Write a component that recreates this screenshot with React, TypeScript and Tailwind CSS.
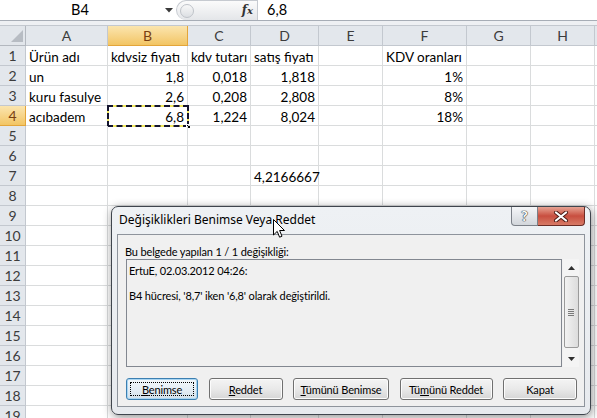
import React from "react";

type Cell = { t: string; r?: boolean };

const L = (t: string): Cell => ({ t });
const R = (t: string): Cell => ({ t, r: true });
const E: Cell = { t: "" };

const letters = ["A", "B", "C", "D", "E", "F", "G", "H", ""];

const data: Cell[][] = [
  [L("Ürün adı"), L("kdvsiz fiyatı"), L("kdv tutarı"), L("satış fiyatı"), E, L("KDV oranları"), E, E, E],
  [L("un"), R("1,8"), R("0,018"), R("1,818"), E, R("1%"), E, E, E],
  [L("kuru fasulye"), R("2,6"), R("0,208"), R("2,808"), E, R("8%"), E, E, E],
  [L("acıbadem"), R("6,8"), R("1,224"), R("8,024"), E, R("18%"), E, E, E],
  [E, E, E, E, E, E, E, E, E],
  [E, E, E, E, E, E, E, E, E],
  [E, E, E, L("4,2166667"), E, E, E, E, E],
];

function rowCells(i: number): Cell[] {
  if (i < data.length) return data[i];
  return [E, E, E, E, E, E, E, E, E];
}

function Btn({ children, w, focused }: { children: React.ReactNode; w: string; focused?: boolean }) {
  return (
    <div
      className={
        "relative flex h-[22px] items-center justify-center whitespace-nowrap rounded-[3px] border " +
        w +
        " " +
        (focused
          ? "border-[#3c7fb1] bg-gradient-to-b from-[#f4f8fb] via-[#e6eef5] to-[#d3e0ea] shadow-[inset_0_0_0_1px_#a9d6f3]"
          : "border-[#707070] bg-gradient-to-b from-[#f4f4f4] via-[#e9e9e9] to-[#d6d6d6] shadow-[inset_0_0_0_1px_#fcfcfc]")
      }
    >
      {focused && <div className="absolute inset-[3px] border border-dotted border-black" />}
      <span className="no-underline leading-[15px]">{children}</span>
    </div>
  );
}

export default function App() {
  return (
    <div className="relative h-[418px] w-[597px] overflow-hidden bg-white font-['Lato',sans-serif] text-black">
      {/* formula bar */}
      <div className="flex h-[21px] border-b border-[#a7adb6] bg-white">
        <div className="flex w-[176px] items-center">
          <span className="w-[160px] text-center text-[14.5px] leading-[20px]">B4</span>
          <svg width="8" height="5" viewBox="0 0 8 5" className="ml-[5px]">
            <path d="M0 0 L8 0 L4 4.5 Z" fill="#3a3a3a" />
          </svg>
        </div>
        <div className="flex w-[81px] items-center rounded-l-[10px] border-l border-t border-[#c6cad0] bg-gradient-to-b from-[#fbfbfb] to-[#e4e6e9]">
          <div className="ml-[3px] h-[14px] w-[14px] rounded-full border border-[#bfc3c9] bg-gradient-to-b from-[#f8f8f8] to-[#dcdfe3]" />
          <span className="ml-auto mr-[4px] font-['DejaVu_Serif',serif] text-[12px] font-bold italic leading-[20px] text-[#333]">
            f<span className="text-[10px]">x</span>
          </span>
        </div>
        <div className="w-px bg-[#c6cad0]" />
        <div className="flex-1 pl-[9px] text-[14.5px] leading-[20px]">6,8</div>
      </div>
      <div className="h-[5px] border-b border-[#c3c8cf] bg-[#eef0f3]" />

      {/* sheet */}
      <div className="grid grid-cols-[26px_82px_80px_63px_68px_64px_84px_64px_64px_64px] text-[13.5px]">
        {/* header row */}
        <div className="relative h-[20px] border-b border-r border-[#b3b8bf] bg-[#e2e6eb]">
          <svg width="12" height="12" viewBox="0 0 12 12" className="absolute bottom-[3px] right-[2px]">
            <path d="M12 0 L12 12 L0 12 Z" fill="#b7bcc3" />
          </svg>
        </div>
        {letters.map((l, i) => (
          <div
            key={"h" + i}
            className={
              "flex h-[20px] items-center justify-center border-b border-r text-[14px] leading-[18px] " +
              (l === "B"
                ? "border-[#e3a53a] bg-gradient-to-b from-[#fbe5ae] to-[#f2c563] text-[#7a3f12]"
                : "border-[#c3c8cf] bg-[#e3e7ec] text-[#3c3c3c]")
            }
          >
            {l}
          </div>
        ))}
        {Array.from({ length: 19 }).map((_, ri) => {
          const cells = rowCells(ri);
          const sel = ri === 3;
          return (
            <React.Fragment key={"r" + ri}>
              <div
                className={
                  "flex h-[20px] items-center justify-center border-b border-r text-[14px] leading-[18px] " +
                  (sel
                    ? "border-[#e3a53a] bg-gradient-to-b from-[#fbe5ae] to-[#f2c563] text-[#7a3f12]"
                    : "border-[#c3c8cf] bg-[#e3e7ec] text-[#3c3c3c]")
                }
              >
                {ri + 1}
              </div>
              {cells.map((c, ci) => (
                <div
                  key={"c" + ri + "-" + ci}
                  className={
                    "relative flex h-[20px] items-center whitespace-nowrap border-b border-r border-[#dadcdd] pt-[2px] leading-[18px] " +
                    (c.r ? "justify-end pr-[3px]" : "pl-[3px]")
                  }
                >
                  {ri === 3 && ci === 1 && (
                    <>
                      <div className="absolute -left-px -top-px bottom-[-2px] right-[-2px] border-2 border-[#f3ea5f]" />
                      <div className="absolute -left-px -top-px bottom-[-2px] right-[-2px] border-2 border-dashed border-[#14142e]" />
                      <div className="absolute bottom-[-4px] right-[-4px] h-[5px] w-[5px] border border-white bg-black" />
                    </>
                  )}
                  <span className="relative">{c.t}</span>
                </div>
              ))}
            </React.Fragment>
          );
        })}
      </div>

      {/* dialog */}
      <div className="absolute left-[111px] top-[206px] flex h-[209px] w-[480px] flex-col rounded-[7px] border border-[#3f454d] bg-gradient-to-b from-[#eef1f4] to-[#e7eaee] font-['Lato',sans-serif] text-[11px] tracking-[-0.15px] text-black shadow-[1px_2px_10px_rgba(0,0,0,0.45)]">
        <div className="flex h-[27px] shrink-0">
          <div className="flex-1 whitespace-nowrap pl-[7px] pt-[5px] font-['Noto_Sans',sans-serif] text-[12px] tracking-normal leading-[16px]">Değişiklikleri Benimse Veya Reddet</div>
          <div className="mr-[5px] flex h-[19px]">
            <div className="flex w-[27px] items-center justify-center rounded-bl-[4px] border border-t-0 border-[#7b8088] bg-gradient-to-b from-[#f5f6f8] via-[#e3e6ea] to-[#d2d6db]">
              <span className="text-[14px] font-bold leading-[16px] text-white [text-shadow:0_0_1px_#333,0_0_1px_#333,0_0_1px_#333]">?</span>
            </div>
            <div className="flex w-[47px] items-center justify-center rounded-br-[4px] border border-l-0 border-t-0 border-[#6b2c25] bg-gradient-to-b from-[#e6a394] via-[#c84e3f] to-[#d77a66]">
              <svg width="16" height="11" viewBox="0 0 16 11">
                <path d="M3 1.5 L13 9.5 M13 1.5 L3 9.5" stroke="#4a1a14" strokeWidth="4" strokeLinecap="round" />
                <path d="M3 1.5 L13 9.5 M13 1.5 L3 9.5" stroke="#ffffff" strokeWidth="2.2" strokeLinecap="round" />
              </svg>
            </div>
          </div>
        </div>
        <div className="mx-[5px] mb-[7px] flex flex-1 flex-col border border-[#8e949c] bg-[#f0f0f0] pl-[7px] pt-[9px]">
          <div className="whitespace-nowrap leading-[15px]">Bu belgede yapılan 1 / 1 değişikliği:</div>
          <div className="ml-[1px] flex">
            <div className="h-[108px] w-[436px] border border-[#828790] bg-[#f0f0f0] pl-[2px] pt-[3px]">
              <div className="leading-[15px]">ErtuE, 02.03.2012 04:26:</div>
              <div className="mt-[10px] leading-[15px]">B4 hücresi, '8,7' iken '6,8' olarak değiştirildi.</div>
            </div>
            <div className="ml-[1px] flex h-[108px] w-[16px] flex-col items-center bg-[#f4f4f4]">
              <div className="flex h-[17px] items-center justify-center">
                <svg width="7" height="4" viewBox="0 0 7 4">
                  <path d="M0 4 L3.5 0 L7 4 Z" fill="#2f2f2f" />
                </svg>
              </div>
              <div className="flex h-[72px] w-[15px] items-center justify-center rounded-[2px] border border-[#9a9a9a] bg-gradient-to-r from-[#f2f2f2] to-[#dcdcdc]">
                <div className="flex flex-col gap-[1px]">
                  <div className="h-px w-[6px] bg-[#7a7a7a]" />
                  <div className="h-px w-[6px] bg-[#7a7a7a]" />
                  <div className="h-px w-[6px] bg-[#7a7a7a]" />
                  <div className="h-px w-[6px] bg-[#7a7a7a]" />
                </div>
              </div>
              <div className="flex-1" />
              <div className="flex h-[17px] items-center justify-center">
                <svg width="7" height="4" viewBox="0 0 7 4">
                  <path d="M0 0 L3.5 4 L7 0 Z" fill="#2f2f2f" />
                </svg>
              </div>
            </div>
          </div>
          <div className="ml-[1px] mt-[11px] flex w-[451px] justify-between">
            <Btn w="w-[72px]" focused>
              <span className="underline">B</span>enimse
            </Btn>
            <Btn w="w-[74px]">
              <span className="underline">R</span>eddet
            </Btn>
            <Btn w="w-[96px]">
              <span className="underline">T</span>ümünü Benimse
            </Btn>
            <Btn w="w-[93px]">
              Tü<span className="underline">m</span>ünü Reddet
            </Btn>
            <Btn w="w-[74px]">Kapat</Btn>
          </div>
        </div>
      </div>

      {/* mouse cursor */}
      <svg width="13" height="20" viewBox="0 0 13 20" className="absolute left-[273px] top-[219px]">
        <path d="M0.5 0.5 L0.5 16 L4.2 12.4 L6.6 18.2 L9 17.2 L6.6 11.5 L11.5 11.5 Z" fill="#ffffff" stroke="#000000" strokeWidth="1" strokeLinejoin="round" />
      </svg>
    </div>
  );
}
